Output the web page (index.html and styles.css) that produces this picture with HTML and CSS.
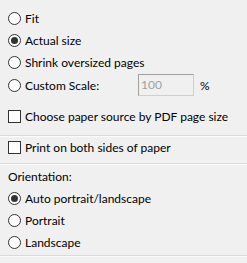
FILE: index.html
```html
<!DOCTYPE html>
<html lang="en">
<head>
    <meta charset="UTF-8">
    <title>Page Sizing</title>
    <link rel="stylesheet" href="styles.css">
</head>
<body>
    <div class="panel">
        <div class="section scale">
            <div class="row"><span class="radio"></span><span class="label">Fit</span></div>
            <div class="row"><span class="radio checked"></span><span class="label">Actual size</span></div>
            <div class="row"><span class="radio"></span><span class="label">Shrink oversized pages</span></div>
            <div class="row custom">
                <span class="radio"></span><span class="label scale-label">Custom Scale:</span>
                <span class="textbox">100</span>
                <span class="unit">%</span>
            </div>
            <div class="row check-row"><span class="checkbox"></span><span class="label">Choose paper source by PDF page size</span></div>
        </div>
        <div class="section duplex">
            <div class="row"><span class="checkbox"></span><span class="label">Print on both sides of paper</span></div>
        </div>
        <div class="section orientation">
            <div class="heading">Orientation:</div>
            <div class="row"><span class="radio checked"></span><span class="label">Auto portrait/landscape</span></div>
            <div class="row"><span class="radio"></span><span class="label">Portrait</span></div>
            <div class="row"><span class="radio"></span><span class="label">Landscape</span></div>
        </div>
    </div>
</body>
</html>
```

FILE: styles.css
```css
body {
    margin: 0;
    background-color: #f0f0f0;
    font-family: 'Lato', sans-serif;
    font-size: 12px;
    color: #000;
}
.panel {
    width: 247px;
    height: 263px;
    overflow: hidden;
}
.section {
    border-bottom: 1px solid #dadada;
    box-shadow: 0 1px 0 #fbfbfb;
}
.scale {
    padding-top: 7px;
    padding-bottom: 8px;
}
.duplex {
    padding-bottom: 5px;
}
.orientation {
    padding-top: 3px;
    padding-bottom: 2px;
}
.row {
    display: flex;
    align-items: center;
    height: 22px;
    padding-left: 8px;
}
.row.custom {
    height: 24px;
}
.row.check-row {
    margin-top: 8px;
}
.label {
    margin-left: 4px;
    white-space: nowrap;
}
.scale-label {
    width: 113px;
}
.heading {
    height: 20px;
    line-height: 20px;
    padding-left: 8px;
}
.radio {
    width: 11px;
    height: 11px;
    border: 1px solid #333;
    border-radius: 50%;
    background-color: #fff;
    display: flex;
    align-items: center;
    justify-content: center;
    flex-shrink: 0;
}
.radio.checked::after {
    content: '';
    width: 7px;
    height: 7px;
    border-radius: 50%;
    background-color: #333;
}
.checkbox {
    width: 11px;
    height: 11px;
    border: 1px solid #333;
    background-color: #fff;
    flex-shrink: 0;
}
.textbox {
    width: 52px;
    height: 20px;
    line-height: 20px;
    padding-left: 2px;
    border: 1px solid #cfcfcf;
    border-left-color: #a0a0a0;
    border-top-color: #a0a0a0;
    color: #a0a0a0;
    background-color: #f0f0f0;
}
.unit {
    margin-left: 6px;
}
```
